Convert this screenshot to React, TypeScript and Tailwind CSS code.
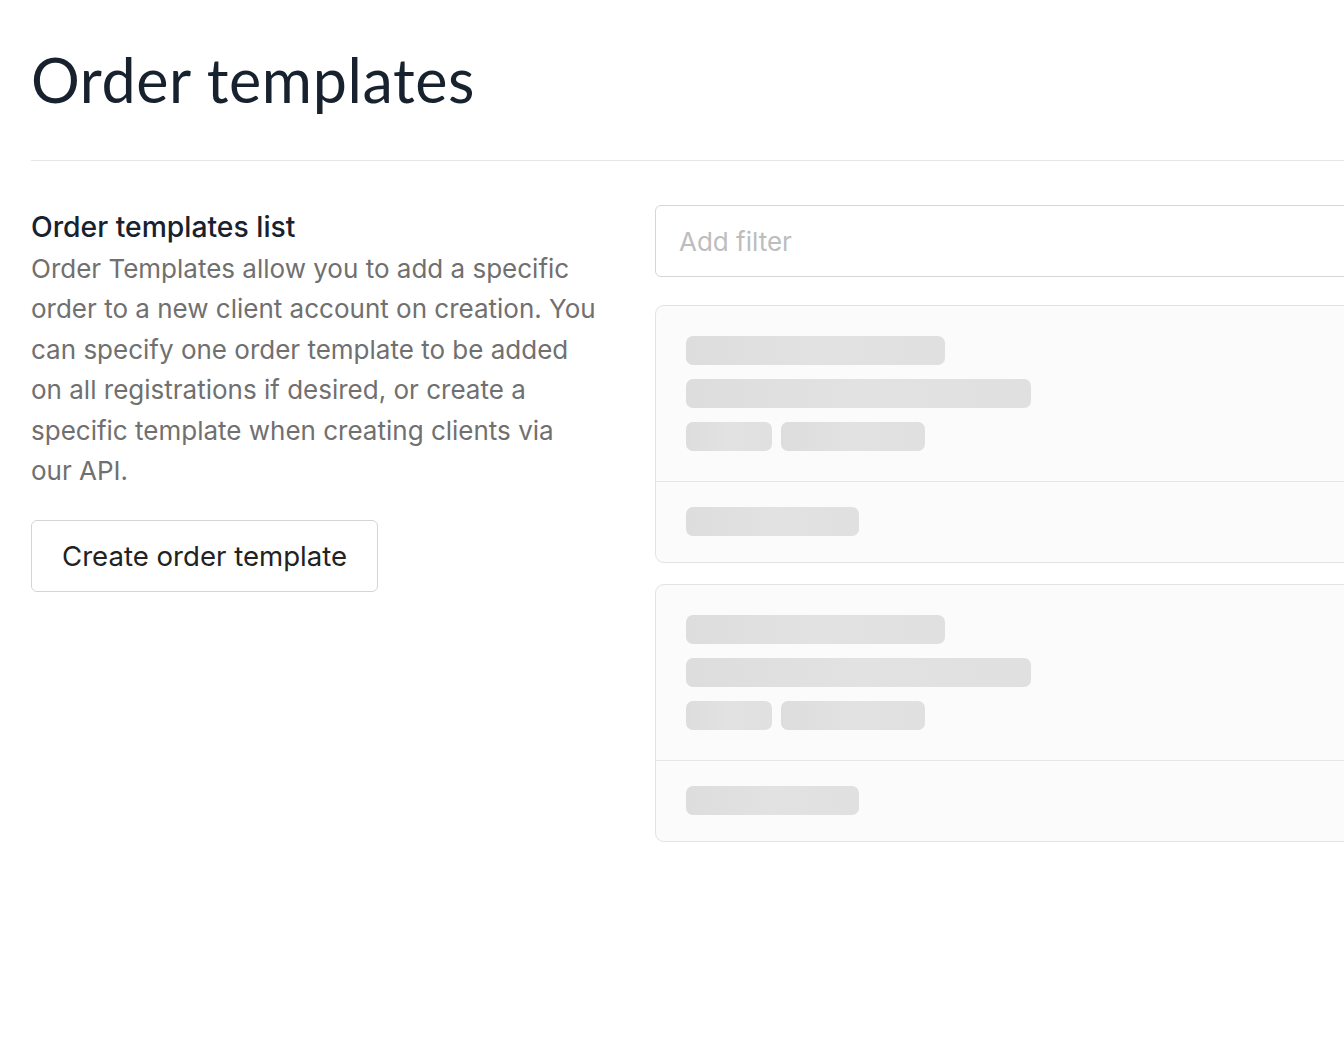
import React from "react";

function Bar({ w }: { w: string }) {
  return (
    <div
      className={`h-[29px] rounded-[7px] bg-gradient-to-r from-[#dddddd] via-[#e2e2e2] to-[#e0e0e0] ${w}`}
    />
  );
}

function SkeletonCard() {
  return (
    <div className="rounded-[9px] border border-[#e3e3e3] bg-[#fbfbfb]">
      <div className="flex flex-col gap-[14px] px-[30px] pt-[30px] pb-[30px]">
        <Bar w="w-[259px]" />
        <Bar w="w-[345px]" />
        <div className="flex gap-[9px]">
          <Bar w="w-[86px]" />
          <Bar w="w-[144px]" />
        </div>
      </div>
      <div className="border-t border-[#e6e6e6] px-[30px] pt-[25px] pb-[26px]">
        <Bar w="w-[173px]" />
      </div>
    </div>
  );
}

export default function App() {
  return (
    <div className="min-h-[1050px] w-full overflow-hidden bg-white">
      <div className="w-[1500px] pl-[31px]">
        <h1
          className="pt-[40px] text-[61px] leading-[80px] tracking-[0.6px] text-[#17222e]"
          style={{ fontFamily: "Lato, 'Noto Sans', sans-serif" }}
        >
          Order templates
        </h1>
        <div className="mt-[40px] h-px bg-[#e6e6e6]" />
        <div
          className="mt-[44px] flex gap-[57px]"
          style={{ fontFamily: "Inter, 'Noto Sans', sans-serif" }}
        >
          <div className="w-[567px] shrink-0">
            <h2 className="text-[28.3px] font-medium leading-[44px] text-[#17222e]">
              Order templates list
            </h2>
            <p className="text-[26px] leading-[40.4px] text-[#707070]">
              Order Templates allow you to add a specific order to a new client
              account on creation. You can specify one order template to be
              added on all registrations if desired, or create a specific
              template when creating clients via our API.
            </p>
            <button className="mt-[29px] h-[72px] rounded-[6px] border border-[#d4d4d4] bg-white px-[30px] text-[27.6px] text-[#222222]">
              Create order template
            </button>
          </div>
          <div className="flex w-[850px] flex-col gap-[21px]">
            <div className="mb-[7px] flex h-[72px] items-center rounded-[6px] border border-[#d6d6d6] bg-white px-[23px]">
              <span className="text-[26px] text-[#bdbdbd]">Add filter</span>
            </div>
            <SkeletonCard />
            <SkeletonCard />
          </div>
        </div>
      </div>
    </div>
  );
}
